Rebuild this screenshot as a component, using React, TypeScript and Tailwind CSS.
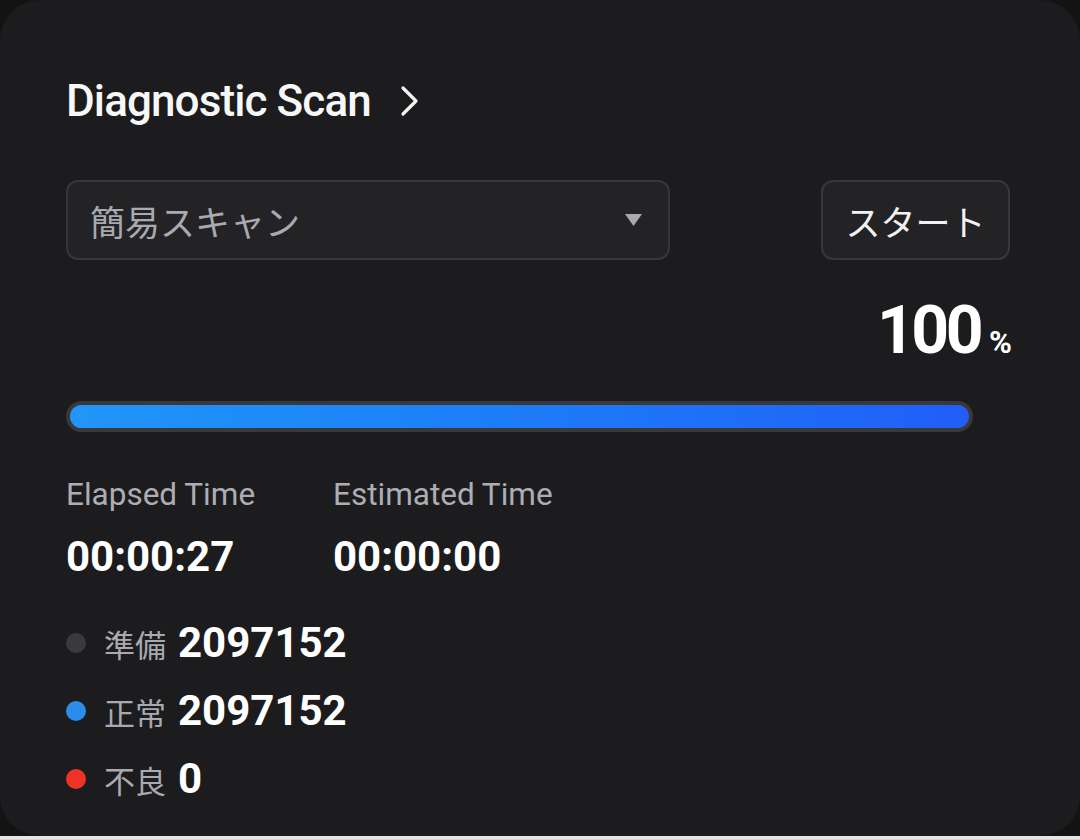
// Diagnostic Scan card — 簡易スキャン result view.
import type { ReactNode } from "react";

const LATIN = "font-['Roboto','Noto_Sans_CJK_JP',sans-serif]";
const CJK = "font-['Noto_Sans_CJK_JP','Noto_Sans_CJK_SC',sans-serif]";

const LEGEND: { dot: string; label: string; value: string }[] = [
  { dot: "bg-[#3a3a3c]", label: "準備", value: "2097152" },
  { dot: "bg-[#2b8de9]", label: "正常", value: "2097152" },
  { dot: "bg-[#ef3326]", label: "不良", value: "0" },
];

function ChevronRight() {
  return (
    <svg width="22" height="32" viewBox="0 0 22 32" fill="none" aria-hidden>
      <path
        d="M4 3 L17 16 L4 29"
        stroke="#f2f2f2"
        strokeWidth="3.2"
        strokeLinecap="round"
        strokeLinejoin="round"
      />
    </svg>
  );
}

function Caret() {
  return (
    <svg width="19" height="14" viewBox="0 0 19 14" aria-hidden>
      <path d="M1 1 H18 L9.5 13 Z" fill="#a9a9b1" />
    </svg>
  );
}

function Box({ className, children }: { className: string; children: ReactNode }) {
  return (
    <div
      className={`flex h-[80px] items-center rounded-[12px] border-2 border-[#38383c] bg-[#232325] ${className}`}
    >
      {children}
    </div>
  );
}

function TimeBlock({ label, value, className }: { label: string; value: string; className: string }) {
  return (
    <div className={`flex flex-col ${className}`}>
      <span className={`${LATIN} text-[31.5px] leading-[30px] text-[#adadb5]`}>{label}</span>
      <span className={`${LATIN} mt-[26px] text-[42px] font-bold leading-[42px] text-white`}>
        {value}
      </span>
    </div>
  );
}

export default function App() {
  return (
    <div className="flex h-[839px] w-[1080px] flex-col bg-[#131314]">
      <div className="h-[836px] rounded-[40px] bg-[#1c1c1e] pl-[66px] pr-[70px] pt-[79px]">
        <div className="flex h-[44px] items-center gap-[28px]">
          <h1 className={`${LATIN} text-[44px] font-medium leading-[44px] tracking-[-0.9px] text-[#f7f7f7]`}>
            Diagnostic Scan
          </h1>
          <ChevronRight />
        </div>

        <div className="mt-[57px] flex justify-between">
          <Box className="w-[604px] justify-between pl-[22px] pr-[25px]">
            <span className={`${CJK} text-[35px] leading-none text-[#a9a9b0]`}>簡易スキャン</span>
            <Caret />
          </Box>
          <Box className="w-[189px] justify-center">
            <span className={`${CJK} text-[35px] leading-none text-[#f2f2f2]`}>スタート</span>
          </Box>
        </div>

        <div className={`${LATIN} mt-[38px] flex items-baseline justify-end font-bold text-white`}>
          <span className="text-[66px] leading-[66px] tracking-[-3.5px]">100</span>
          <span className="ml-[9px] text-[31px] leading-none tracking-[-2px]">%</span>
        </div>

        <div className="mt-[37px] h-[31px] w-[907px] rounded-full bg-[#39393b] p-[4px]">
          <div className="h-full w-full rounded-full bg-gradient-to-r from-[#2196f8] to-[#215ef7]" />
        </div>

        <div className="mt-[48px] flex">
          <TimeBlock label="Elapsed Time" value="00:00:27" className="w-[267px]" />
          <TimeBlock label="Estimated Time" value="00:00:00" className="" />
        </div>

        <div className="mt-[31px] flex flex-col">
          {LEGEND.map((row) => (
            <div key={row.label} className="flex h-[68px] items-center">
              <span className={`h-[20px] w-[20px] rounded-full ${row.dot}`} />
              <span className={`${CJK} ml-[18px] text-[31px] leading-none text-[#a9a9b0]`}>
                {row.label}
              </span>
              <span className={`${LATIN} ml-[12px] text-[42px] font-bold leading-none text-white`}>
                {row.value}
              </span>
            </div>
          ))}
        </div>
      </div>
      <div className="h-[3px] bg-[#e6e6e6]" />
    </div>
  );
}
